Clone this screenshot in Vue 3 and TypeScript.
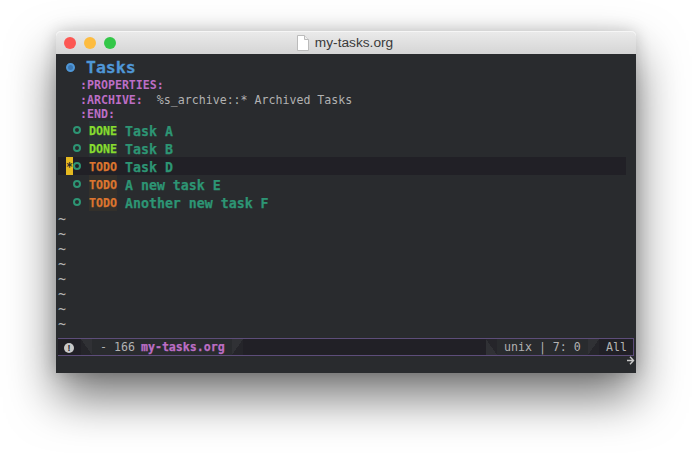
<script setup lang="ts">
interface Task { state: string; title: string; current?: boolean }
const tasks: Task[] = [
  { state: 'DONE', title: 'Task A' },
  { state: 'DONE', title: 'Task B' },
  { state: 'TODO', title: 'Task D', current: true },
  { state: 'TODO', title: 'A new task E' },
  { state: 'TODO', title: 'Another new task F' },
]
const tildes = Array.from({ length: 9 }, (_, i) => i)
</script>

<template>
  <div class="page">
    <div class="window">
      <header class="titlebar">
        <span class="lights">
          <i class="light red"></i><i class="light yellow"></i><i class="light green"></i>
        </span>
        <span class="title">
          <svg class="doc" width="12" height="16" viewBox="0 0 12 16">
            <path d="M.5.5h7l4 4v11h-11z" fill="#fff" stroke="#bbb" />
            <path d="M7.500.5v4h4" fill="#eee" stroke="#bbb" />
          </svg>
          my-tasks.org
        </span>
      </header>
      <main class="editor">
        <div class="buffer">
          <div class="heading">
            <span class="h-bullet"></span>
            <span>Tasks</span>
          </div>
          <div class="drawer">
            <div class="prop"><b>:PROPERTIES:</b></div>
            <div class="prop"><b>:ARCHIVE:</b><span class="val">%s_archive::* Archived Tasks</span></div>
            <div class="prop"><b>:END:</b></div>
          </div>
          <div class="tasks">
            <div v-for="t in tasks" :key="t.title" class="task" :class="{ current: t.current }">
              <span class="cursor"><template v-if="t.current">*</template></span>
              <span class="ring"></span>
              <span class="state" :class="[t.state.toLowerCase(), { plain: t.current }]">{{ t.state }}</span>
              <span class="name">{{ t.title }}</span>
            </div>
          </div>
          <div class="tildes">
            <div v-for="n in tildes" :key="n" class="tilde">~</div>
          </div>
        </div>
        <div class="modeline">
          <div class="seg-a">
            <span class="info">!</span>
          </div>
          <span class="slant s1"></span>
          <div class="seg-b">
            <span class="dash">-</span><span>166</span><span class="fname">my-tasks.org</span>
          </div>
          <span class="slant s2"></span>
          <div class="seg-fill"></div>
          <span class="slant s3"></span>
          <div class="seg-c">unix <span class="bar">|</span> 7: 0</div>
          <span class="slant s4"></span>
          <div class="seg-d">All</div>
        </div>
        <div class="mini">
          <svg width="8" height="9" viewBox="0 0 8 9"><path d="M3 .8l3.500 3.700-3.500 3.700M0 4.500h6" fill="none" stroke="#c8c8c8" stroke-width="1.400" /></svg>
        </div>
      </main>
    </div>
  </div>
</template>

<style>
html, body { margin: 0; background: #fff; overflow: hidden; }
</style>

<style scoped>
.page {
  width: 692px;
  height: 453px;
  padding: 31px 56px 0;
  box-sizing: border-box;
  font-family: "DejaVu Sans Mono", monospace;
}
.window {
  width: 580px;
  height: 342px;
  display: flex;
  flex-direction: column;
  border-radius: 5px 5px 0 0;
  box-shadow: 0 24px 48px rgba(0, 0, 0, .55), 0 0 16px rgba(0, 0, 0, .18);
}
.titlebar {
  height: 23px;
  flex: none;
  display: flex;
  align-items: center;
  justify-content: center;
  position: relative;
  background: linear-gradient(#ebebeb, #d5d5d5);
  border-radius: 5px 5px 0 0;
  box-shadow: inset 0 1px 0 #f6f6f6;
}
.lights {
  position: absolute;
  left: 8px;
  top: 6px;
  display: flex;
  gap: 8px;
}
.light { width: 12px; height: 12px; border-radius: 50%; }
.red { background: #fc5753; }
.yellow { background: #fdbc40; }
.green { background: #33c748; }
.title {
  display: flex;
  align-items: center;
  gap: 6px;
  font: 13.700px "Liberation Sans", sans-serif;
  color: #3a3a3a;
  margin-left: -2px;
}
.editor {
  flex: 1;
  min-height: 0;
  display: flex;
  flex-direction: column;
  background: #292b2e;
}
.buffer {
  height: 284px;
  overflow: hidden;
  padding: 5px 10px 0 2px;
  flex: none;
  box-sizing: border-box;
}
.heading {
  height: 17px;
  display: flex;
  align-items: center;
  padding-left: 8px;
  color: #4f97d7;
  font-size: 16.500px;
  font-weight: 700;
  -webkit-text-stroke: .3px #4f97d7;
}
.h-bullet {
  width: 5px;
  height: 5px;
  margin-right: 11px;
  border-radius: 50%;
  background: #3c78b4;
  border: 2px solid #4f97d7;
}
.drawer { padding: 2px 0 0 22px; }
.prop {
  height: 14.500px;
  line-height: 14.500px;
  font-size: 11.600px;
  color: #bc6ec5;
  white-space: pre;
}
.val { color: #b2b2b2; margin-left: 14px; }
.tasks { margin-top: -.5px; }
.task {
  height: 18px;
  display: flex;
  align-items: center;
  padding-left: 8px;
  font-size: 13.250px;
  font-weight: 700;
  color: #2d9574;
  -webkit-text-stroke: .25px #2d9574;
}
.current { background: #212026; }
.cursor {
  width: 7px;
  height: 18px;
  line-height: 21px;
  font-size: 11.600px;
  color: #292b2e;
  text-align: center;
  -webkit-text-stroke: 0;
}
.current .cursor { background: #e5b920; }
.ring {
  width: 4px;
  height: 4px;
  border: 2px solid #2d9574;
  border-radius: 50%;
  margin-right: 8px;
}
.state {
  height: 18px;
  line-height: 20px;
  width: 28px;
  white-space: nowrap;
  margin-right: 8px;
  font-size: 11.600px;
}
.name { padding-top: 2px; }
.done { color: #86dc2f; background: #293235; -webkit-text-stroke: .25px #86dc2f; }
.todo { color: #dc752f; background: #33302b; -webkit-text-stroke: .25px #dc752f; }
.plain { background: none; }
.tildes { margin-top: 1px; }
.tilde { height: 15px; line-height: 15px; font-size: 13.250px; color: #b2b2b2; }
.modeline {
  height: 18px;
  flex: none;
  margin-left: 2px;
  margin-right: 2px;
  box-sizing: border-box;
  border-top: 1px solid #5d4d7a;
  border-bottom: 1px solid #5d4d7a;
  border-right: 1px solid #5d4d7a;
  display: flex;
  align-items: stretch;
  background: #212026;
  color: #b2b2b2;
  font-size: 11.600px;
}
.seg-a {
  width: 23px;
  background: #212026;
  display: flex;
  align-items: center;
  justify-content: center;
}
.info {
  width: 10px;
  height: 10px;
  border-radius: 50%;
  background: #c8c8c8;
  color: #212026;
  font: 700 9px/10px "Liberation Sans", sans-serif;
  text-align: center;
  margin-top: 1px;
  margin-right: 1px;
}
.slant { width: 11px; }
.s1 { background: linear-gradient(to bottom left, #303135 50%, #25252a 50%); }
.s2 { background: linear-gradient(to bottom right, #303135 50%, #25252a 50%); }
.s3 { background: linear-gradient(to top right, #303135 50%, #25252a 50%); }
.s4 { background: linear-gradient(to top left, #25252a 50%, #303135 50%); }
.seg-b {
  width: 140px;
  background: #292b2e;
  display: flex;
  align-items: center;
  padding-left: 8px;
  box-sizing: border-box;
  gap: 7px;
}
.dash { margin-right: 0; }
.fname { color: #bc6ec5; font-weight: 700; -webkit-text-stroke: .25px #bc6ec5; margin-left: -1px; }
.seg-fill { flex: 1; background: #212026; }
.seg-c {
  width: 91px;
  box-sizing: border-box;
  background: #292b2e;
  display: flex;
  align-items: center;
  white-space: pre;
  padding-left: 7px;
}
.seg-d {
  width: 34px;
  padding-left: 7px;
  box-sizing: border-box;
  display: flex;
  align-items: center;
  background: #212026;
}
.mini {
  flex: 1;
  display: flex;
  align-items: center;
  justify-content: flex-end;
  padding: 0 1px 8px 0;
}
</style>
